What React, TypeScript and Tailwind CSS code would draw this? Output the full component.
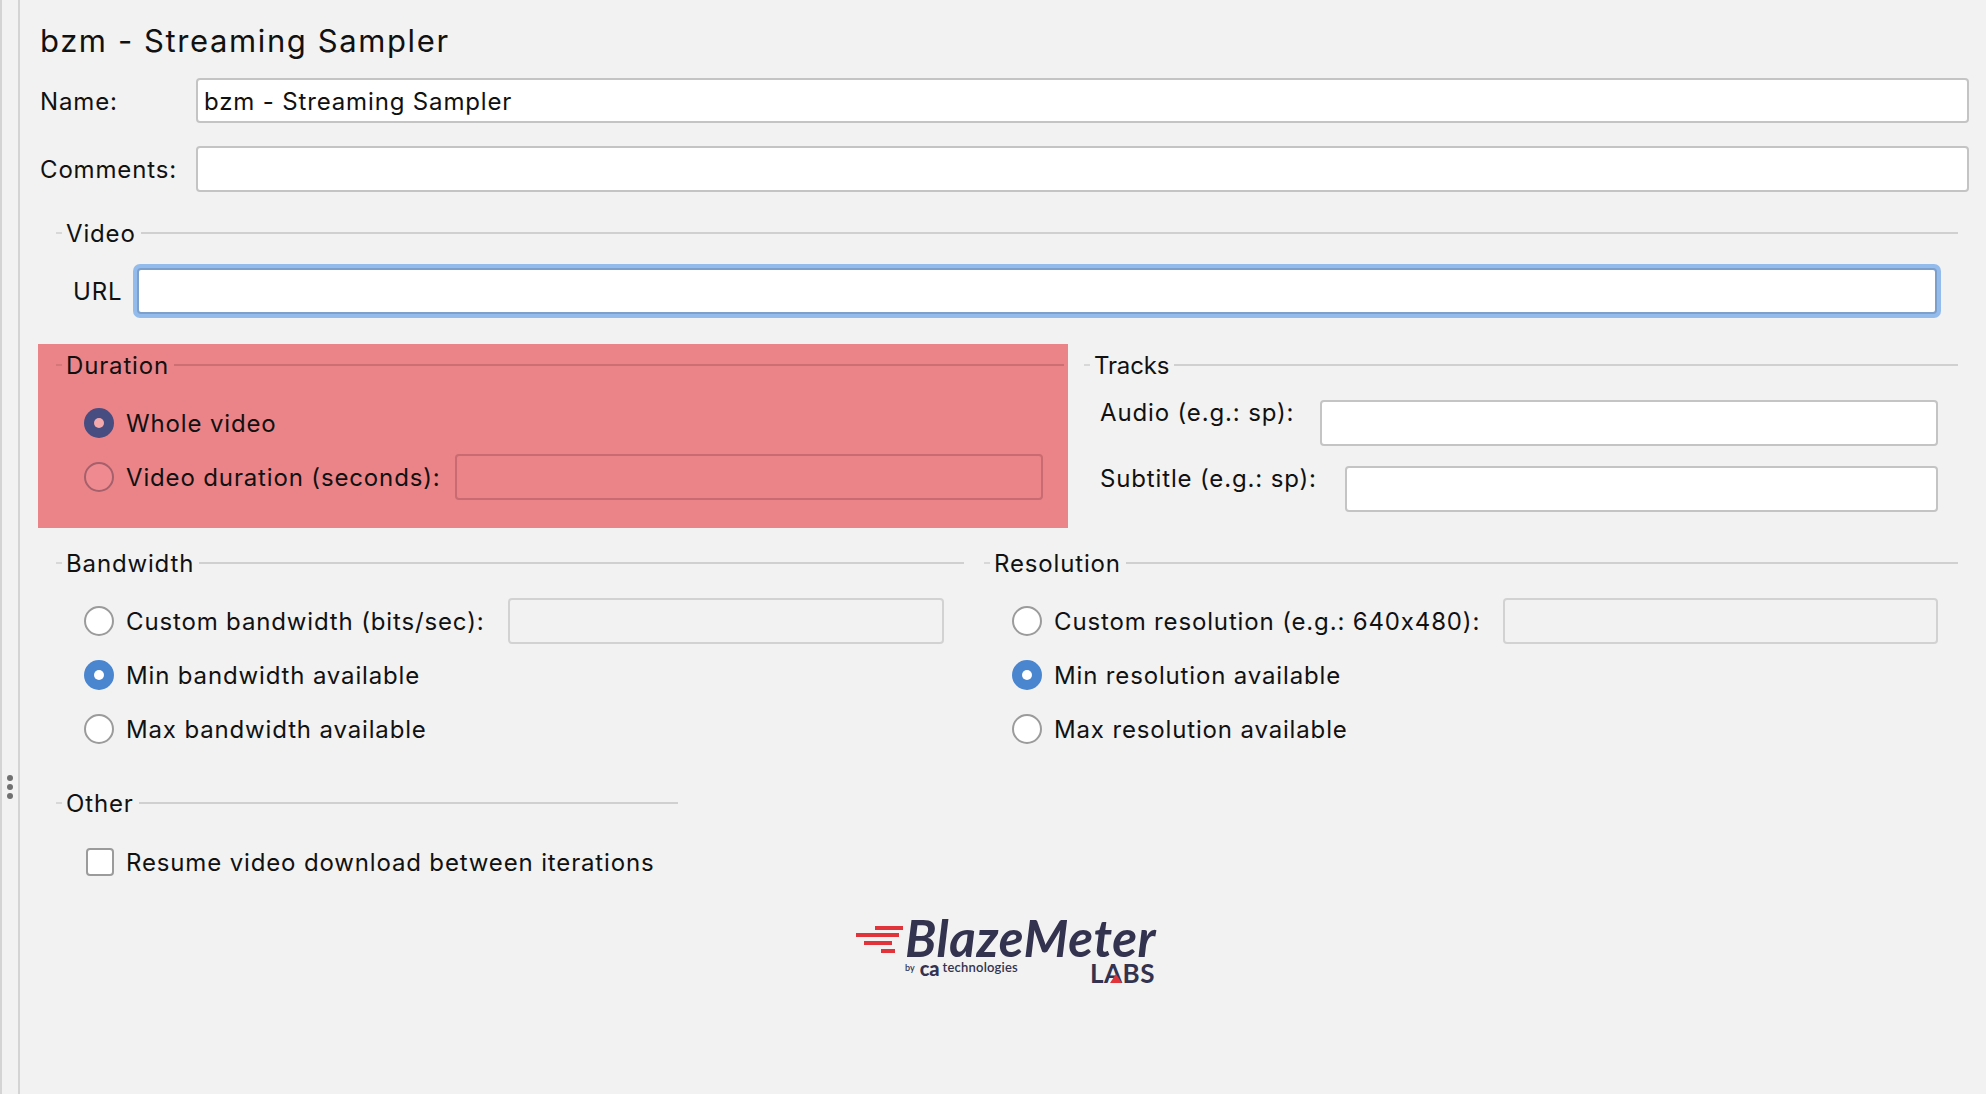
const font = "font-['Inter',sans-serif]";
const copy = 'text-[24px] tracking-[0.85px] text-[#111] whitespace-nowrap pt-[2px]';

const Legend = ({
  label,
  lineClass = 'bg-[#d0d0d0]',
  dashClass = 'bg-[#d8d8d8]',
  trackClass = 'tracking-[0.85px]',
}: {
  label: string;
  lineClass?: string;
  dashClass?: string;
  trackClass?: string;
}) => (
  <div className="flex items-center h-[30px]">
    <div className={`w-[6px] h-[2px] ${dashClass}`} />
    <span className={`ml-[4px] text-[24px] leading-[30px] text-[#111] pt-[2px] ${trackClass}`}>{label}</span>
    <div className={`flex-1 ml-[5px] h-[2px] ${lineClass}`} />
  </div>
);

const Field = ({ className = '', value = '', disabled = false }: { className?: string; value?: string; disabled?: boolean }) => (
  <div
    className={`h-[46px] rounded-[4px] border-2 flex items-center pl-[6px] ${copy} ${
      disabled ? 'border-[#d2d2d2] bg-[#f2f2f2]' : 'border-[#c4c4c4] bg-white'
    } ${className}`}
  >
    {value}
  </div>
);

const Radio = ({ checked = false }: { checked?: boolean }) =>
  checked ? (
    <div className="w-[30px] h-[30px] rounded-full bg-[#4a86d0] flex items-center justify-center shrink-0">
      <div className="w-[10px] h-[10px] rounded-full bg-white" />
    </div>
  ) : (
    <div className="w-[30px] h-[30px] rounded-full border-2 border-[#9b9b9b] bg-white shrink-0" />
  );

const Option = ({ label, checked, children }: { label: string; checked?: boolean; children?: React.ReactNode }) => (
  <div className="flex items-center h-[46px] pl-[28px]">
    <Radio checked={checked} />
    <span className={`ml-[12px] ${copy}`}>{label}</span>
    {children}
  </div>
);

const Logo = () => (
  <div className="flex ml-[815px] mt-[30px] text-[#33334f]">
    <svg width="50" height="30" viewBox="0 0 50 30" className="mt-[11px]">
      <rect x="20" y="0" width="28" height="4" fill="#e0343a" />
      <rect x="1" y="7" width="43" height="4" fill="#e0343a" />
      <rect x="9" y="15" width="28" height="4" fill="#e0343a" />
      <rect x="26" y="23" width="14" height="4" fill="#e0343a" />
    </svg>
    <div className="w-[250px]">
      <div className="text-[51px] leading-[46px] font-bold italic font-['Lato',sans-serif] tracking-[0.6px]">BlazeMeter</div>
      <div className="flex justify-between font-['Lato',sans-serif]">
        <div className="flex items-center h-[20px] -mt-[3px] text-[13px] font-semibold">
          <span className="text-[9px]">by</span>
          <span className="ml-[5px] text-[20px] font-black leading-none">ca</span>
          <span className="ml-[3px] tracking-[0.2px]">technologies</span>
        </div>
        <div className="relative text-[26px] leading-[24px] font-bold tracking-[0.5px]">
          LABS
          <div className="absolute left-[20px] top-[13px] w-0 h-0 border-l-[6px] border-r-[6px] border-b-[9px] border-l-transparent border-r-transparent border-b-[#e0343a]" />
        </div>
      </div>
    </div>
  </div>
);

const App = () => (
  <div className={`w-[1986px] h-[1094px] flex bg-[#f2f2f2] overflow-hidden ${font}`}>
    <div className="w-[20px] h-full border-l-2 border-r-2 border-[#d4d4d4] flex flex-col items-center gap-[3px] pt-[775px]">
      <div className="w-[6px] h-[6px] rounded-full bg-[#707070]" />
      <div className="w-[6px] h-[6px] rounded-full bg-[#707070]" />
      <div className="w-[6px] h-[6px] rounded-full bg-[#707070]" />
    </div>

    <div className="flex-1 pl-[20px] pr-[17px] pt-[22px]">
      <div className="h-[36px] text-[31px] leading-[36px] tracking-[1.6px] text-[#111] pt-[1px]">bzm - Streaming Sampler</div>

      <div className="flex items-center mt-[20px]">
        <span className={`w-[156px] ${copy}`}>Name:</span>
        <Field className="flex-1 !h-[45px]" value="bzm - Streaming Sampler" />
      </div>
      <div className="flex items-center mt-[23px]">
        <span className={`w-[156px] ${copy}`}>Comments:</span>
        <Field className="flex-1" />
      </div>

      <div className="ml-[16px] mr-[11px] mt-[26px]">
        <Legend label="Video" />
        <div className="flex items-center mt-[16px] pl-[17px] pr-[17px]">
          <span className={`w-[60px] ${copy}`}>URL</span>
          <div className="flex-1 h-[54px] rounded-[7px] bg-[#93bcec] p-[4px]">
            <div className="h-full rounded-[4px] border-2 border-[#7d9fcb] bg-white" />
          </div>
        </div>
      </div>

      <div className="flex mt-[26px]">
        <div className="w-[1030px] h-[184px] -ml-[2px] bg-[#ea8488] pt-[6px] pl-[18px] pr-[4px]">
          <Legend label="Duration" lineClass="bg-[#cd6e73]" dashClass="bg-[#d5767b]" />
          <div className="mt-[20px] flex items-center h-[46px] pl-[28px]">
            <div className="w-[30px] h-[30px] rounded-full bg-[#474d80] flex items-center justify-center shrink-0">
              <div className="w-[10px] h-[10px] rounded-full bg-[#f4a9ad]" />
            </div>
            <span className={`ml-[12px] ${copy}`}>Whole video</span>
          </div>
          <div className="mt-[8px] flex items-center h-[46px] pl-[28px] pr-[21px]">
            <div className="w-[30px] h-[30px] rounded-full border-2 border-[#a5606b] bg-[#ef8b90] shrink-0" />
            <span className={`ml-[12px] ${copy}`}>Video duration (seconds):</span>
            <div className="flex-1 ml-[14px] h-[46px] rounded-[4px] border-2 border-[#c96b70]" />
          </div>
        </div>

        <div className="flex-1 ml-[16px] mr-[11px] pt-[6px]">
          <Legend label="Tracks" trackClass="tracking-[-0.15px]" />
          <div className="flex items-start mt-[20px] pl-[16px] pr-[20px]">
            <span className={`w-[220px] -mt-[1px] leading-[24px] ${copy}`}>Audio (e.g.: sp):</span>
            <Field className="flex-1" />
          </div>
          <div className="flex items-start mt-[20px] pl-[16px] pr-[20px]">
            <span className={`w-[245px] -mt-[1px] leading-[24px] ${copy}`}>Subtitle (e.g.: sp):</span>
            <Field className="flex-1" />
          </div>
        </div>
      </div>

      <div className="flex ml-[16px] mr-[11px] mt-[20px] gap-[20px]">
        <div className="w-[908px]">
          <Legend label="Bandwidth" />
          <div className="mt-[20px] pr-[20px]">
            <Option label="Custom bandwidth (bits/sec):">
              <Field disabled className="flex-1 ml-[23px]" />
            </Option>
            <div className="mt-[8px]">
              <Option label="Min bandwidth available" checked />
            </div>
            <div className="mt-[8px]">
              <Option label="Max bandwidth available" />
            </div>
          </div>
        </div>
        <div className="flex-1">
          <Legend label="Resolution" />
          <div className="mt-[20px] pr-[20px]">
            <Option label="Custom resolution (e.g.: 640x480):">
              <Field disabled className="flex-1 ml-[23px]" />
            </Option>
            <div className="mt-[8px]">
              <Option label="Min resolution available" checked />
            </div>
            <div className="mt-[8px]">
              <Option label="Max resolution available" />
            </div>
          </div>
        </div>
      </div>

      <div className="w-[622px] ml-[16px] mt-[36px]">
        <Legend label="Other" />
        <div className="flex items-center h-[46px] mt-[21px] pl-[30px]">
          <div className="w-[28px] h-[28px] rounded-[4px] border-2 border-[#9b9b9b] bg-white" />
          <span className={`ml-[12px] ${copy}`}>Resume video download between iterations</span>
        </div>
      </div>

      <Logo />
    </div>
  </div>
);

export default App;
